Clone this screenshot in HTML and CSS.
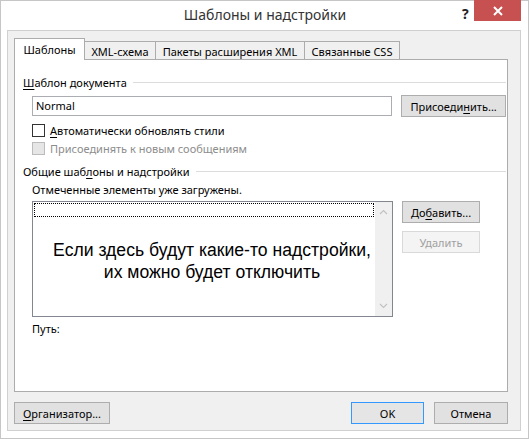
FILE: index.html
```html
<!DOCTYPE html>
<html lang="ru">
<head>
<meta charset="utf-8">
<link rel="stylesheet" href="styles.css">
</head>
<body>
<div class="window">
  <div class="titlebar">
    <div class="title">Шаблоны и надстройки</div>
    <div class="help">?</div>
    <div class="close">
      <svg width="10" height="10" viewBox="0 0 10 10"><path d="M1 1L9 9M9 1L1 9" stroke="#fff" stroke-width="2"/></svg>
    </div>
  </div>
  <div class="client">
    <div class="tabs">
      <div class="tab active t1">Шаблоны</div>
      <div class="tab t2">XML-схема</div>
      <div class="tab t3">Пакеты расширения XML</div>
      <div class="tab t4">Связанные CSS</div>
    </div>
    <div class="panel">
      <div class="group-head g1"><span><u>Ш</u>аблон документа</span><i class="rule"></i></div>
      <div class="row-input">
        <div class="input">Normal</div>
        <div class="btn wide">Присоеди<u>н</u>ить...</div>
      </div>
      <div class="check c1"><span class="box"></span><span><u>А</u>втоматически обновлять стили</span></div>
      <div class="check c2 disabled"><span class="box"></span><span>Присоединять к новым сообщениям</span></div>
      <div class="group-head g2"><span>Общие шаб<u>л</u>оны и надстройки</span><i class="rule"></i></div>
      <div class="note">Отмеченные элементы уже загружены.</div>
      <div class="row-list">
        <div class="listbox">
          <div class="list-area">
            <div class="focus"></div>
            <div class="overlay">Если здесь будут какие-то надстройки,<br>их можно будет отключить</div>
          </div>
          <div class="scroll">
            <svg width="9" height="6" viewBox="0 0 9 6"><path d="M1 5L4.5 1.5L8 5" fill="none" stroke="#c2c2c2" stroke-width="1.2"/></svg>
            <svg width="9" height="6" viewBox="0 0 9 6"><path d="M1 1L4.5 4.5L8 1" fill="none" stroke="#c2c2c2" stroke-width="1.2"/></svg>
          </div>
        </div>
        <div class="side-btns">
          <div class="btn mid">До<u>б</u>авить...</div>
          <div class="btn mid disabled-btn">Удалить</div>
        </div>
      </div>
      <div class="path">Путь:</div>
    </div>
    <div class="footer">
      <div class="btn org"><u>О</u>рганизатор...</div>
      <div class="spacer"></div>
      <div class="btn ok">OK</div>
      <div class="btn cancel">Отмена</div>
    </div>
  </div>
</div>
</body>
</html>
```
FILE: styles.css
```css
* { box-sizing: border-box; }
html, body { margin: 0; padding: 0; background: #fff; }
body { font-family: "Noto Sans", "Open Sans", sans-serif; font-size: 11px; color: #000; }
u { text-decoration: underline; text-underline-offset: 2px; }

.window {
  width: 529px; height: 439px;
  border: 1px solid #c6c6c6;
  padding: 0 7px 7px 6px;
  display: flex; flex-direction: column;
  background: #fff;
}
.titlebar {
  height: 29px; position: relative;
  display: flex; align-items: center; justify-content: center;
}
.title { font-size: 14px; color: #333; margin-top: -2px; margin-left: 2px; }
.help {
  position: absolute; left: 455px; top: 3px;
  font-size: 14px; font-weight: bold; color: #222;
}
.close {
  position: absolute; right: 0; top: -1px;
  width: 47px; height: 21px; background: #c75050;
  display: flex; align-items: center; justify-content: center;
}

.client {
  flex: 1;
  border: 1px solid #d0d0d0;
  background: #f0f0f0;
  padding: 7px 12px 0 6px;
  display: flex; flex-direction: column;
}
.tabs { display: flex; align-items: flex-end; height: 21px; position: relative; z-index: 1; }
.tab {
  height: 18px;
  border: 1px solid #acacac; border-bottom: none;
  margin-left: -1px;
  background: #f0f0f0;
  display: flex; align-items: center; justify-content: center;
  padding-top: 1px;
  color: #000;
}
.t1 { width: 71px; margin-left: 0; }
.t2 { width: 72px; }
.t3 { width: 150px; }
.t4 { width: 96px; }
.tab.active {
  background: #fff; height: 22px; margin-bottom: -1px; padding-top: 0; padding-bottom: 1px;
}
.panel {
  height: 333px;
  border: 1px solid #acacac;
  background: #fff;
  padding: 0 1px 0 8px;
  display: flex; flex-direction: column;
}
.group-head { display: flex; align-items: center; height: 15px; gap: 6px; }
.group-head .rule { flex: 1; height: 1px; background: #dcdcdc; }
.g1 { margin-top: 15px; }
.g2 { margin-top: 9px; }

.row-input { display: flex; align-items: center; margin: 5px 0 0 9px; height: 22px; gap: 9px; }
.input {
  width: 361px; height: 20px;
  border: 1px solid #abadb3; padding: 0 3px;
  line-height: 18px;
}
.btn {
  height: 22px; border: 1px solid #adadad; background: #e1e1e1;
  display: flex; align-items: center; justify-content: center;
  color: #000;
}
.wide { width: 105px; }

.check { display: flex; align-items: center; gap: 5px; margin-left: 9px; height: 13px; }
.check .box { width: 13px; height: 13px; border: 1px solid #333; background: #fff; }
.c1 { margin-top: 7px; }
.c2 { margin-top: 5px; }
.check.disabled { color: #8d8d8d; }
.check.disabled .box { border-color: #bcbcbc; background: #e6e6e6; }

.note { margin: 3px 0 0 9px; height: 15px; line-height: 15px; }
.row-list { display: flex; margin: 4px 0 0 9px; gap: 9px; }
.listbox {
  width: 361px; height: 116px;
  border: 1px solid #828790;
  display: flex;
}
.list-area { flex: 1; position: relative; padding: 1px; }
.focus { height: 14px; border: 1px dotted #000; }
.overlay {
  font-family: "Liberation Sans", Arial, sans-serif;
  font-size: 17.6px; line-height: 22px; color: #000;
  text-align: center; margin-top: 22px; margin-left: 16px;
}
.scroll {
  width: 17px; background: #f0f0f0;
  display: flex; flex-direction: column; justify-content: space-between; align-items: center;
  padding: 7px 0 7px;
}
.side-btns { display: flex; flex-direction: column; gap: 8px; }
.mid { width: 78px; }
.disabled-btn { background: #f4f4f4; border-color: #d9d9d9; color: #a0a0a0; }
.path { margin: 4px 0 0 9px; height: 15px; line-height: 15px; }

.footer { display: flex; margin-top: 10px; height: 22px; gap: 10px; }
.spacer { flex: 1; }
.org { width: 96px; }
.ok { width: 73px; border-color: #3399ff; background: #e5e5e5; }
.cancel { width: 74px; }
```
